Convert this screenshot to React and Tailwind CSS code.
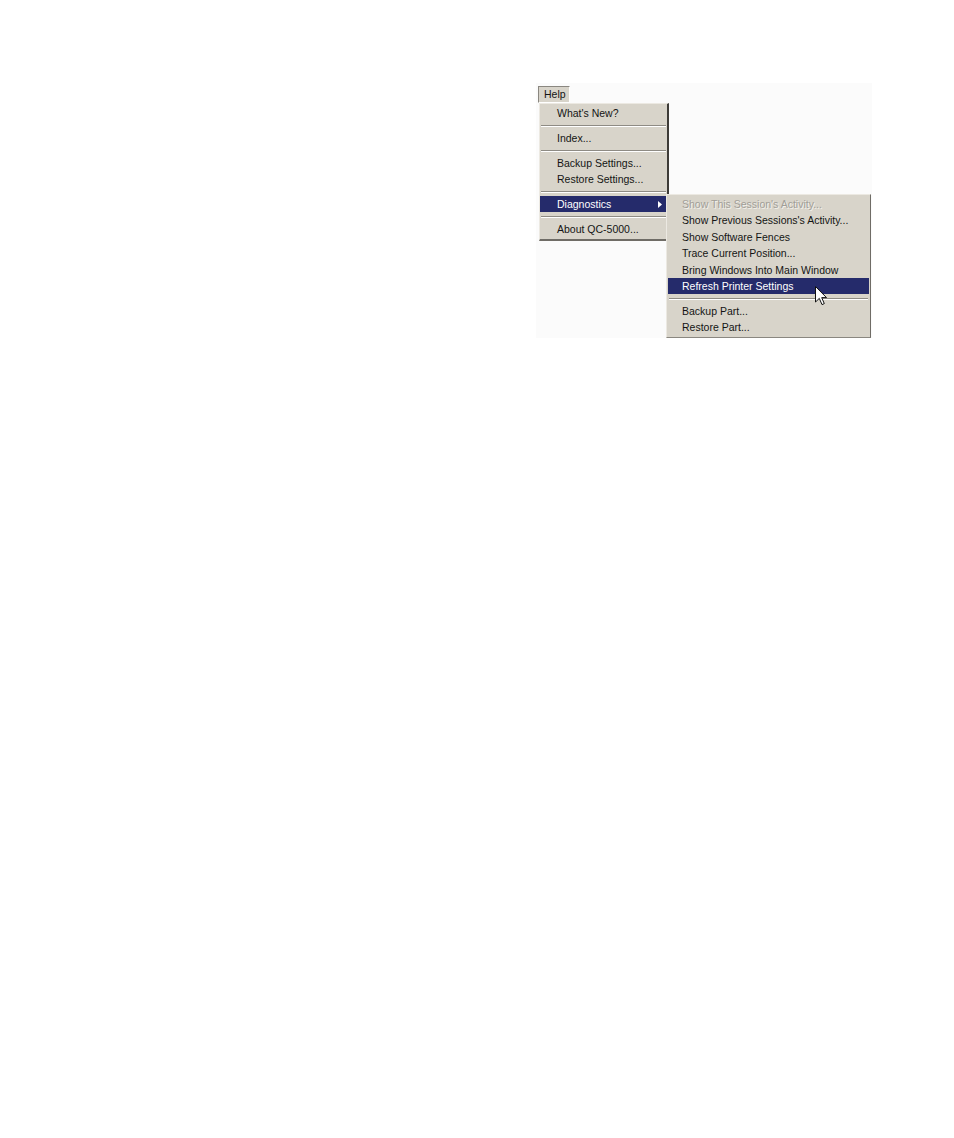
import React from 'react';

const mainItems = [
    { label: "What's New?" },
    { sep: true },
    { label: 'Index...' },
    { sep: true },
    { label: 'Backup Settings...' },
    { label: 'Restore Settings...' },
    { sep: true },
    { label: 'Diagnostics', active: true, sub: true },
    { sep: true },
    { label: 'About QC-5000...' },
];

const subItems = [
    { label: "Show This Session's Activity...", disabled: true },
    { label: "Show Previous Sessions's Activity..." },
    { label: 'Show Software Fences' },
    { label: 'Trace Current Position...' },
    { label: 'Bring Windows Into Main Window' },
    { label: 'Refresh Printer Settings', active: true },
    { sep: true },
    { label: 'Backup Part...' },
    { label: 'Restore Part...' },
];

const Separator = () => (
    <div className="h-[8.5px] flex flex-col justify-center px-[1px]">
        <div className="h-px bg-[#8e8b84]" />
        <div className="h-px bg-white" />
    </div>
);

const MenuRow = ({ item, padLeft }) => {
    if (item.sep) return <Separator />;
    return (
        <div
            className={`relative h-[16.4px] flex items-center ${padLeft} ${item.active ? 'bg-[#252b6b] text-white' : item.disabled ? 'text-[#a19e97]' : 'text-[#141414]'}`}
        >
            <span className={item.disabled ? '[text-shadow:1px_1px_0_#f3f1ec]' : ''}>{item.label}</span>
            {item.sub && (
                <svg className="absolute right-[5px] top-[4.5px]" width="4" height="7" viewBox="0 0 4 7">
                    <path d="M0 0 L4 3.5 L0 7 Z" fill="#ffffff" />
                </svg>
            )}
        </div>
    );
};

const Cursor = () => (
    <svg className="absolute left-[148px] top-[91px]" width="13" height="20" viewBox="0 0 13 20">
        <path d="M0.5 0.5 L0.5 16 L4.3 12.4 L7 18.6 L9.3 17.6 L6.7 11.6 L11.5 11.6 Z" fill="#ffffff" stroke="#111111" strokeWidth="1" strokeLinejoin="miter" />
    </svg>
);

const App = () => {
    return (
        <div className="w-[954px] h-[1138px] bg-white pt-[83px] pl-[536px]" style={{ fontFamily: '"Liberation Sans", Arial, sans-serif' }}>
            <div className="relative w-[336px] h-[255px] bg-[#fbfbfb] text-[10.5px] leading-none pt-[3px]">
                {/* menu bar button */}
                <div className="ml-[2px] w-[32px] h-[17px] border border-t-[#8a8780] border-l-[#8a8780] border-r-white border-b-white bg-[#d8d4ca] flex items-center pl-[5px] text-[#141414]">
                    Help
                </div>

                {/* main menu */}
                <div className="ml-[3px] w-[130px] bg-[#d8d4ca] border-t border-l border-t-[#ece9e2] border-l-[#ece9e2] border-r-2 border-b-2 border-r-[#3d3b37] border-b-[#6f6c66] pt-[1px] pb-[2px]">
                    {mainItems.map((item, i) => (
                        <MenuRow key={i} item={item} padLeft="pl-[17px]" />
                    ))}
                </div>

                {/* Diagnostics submenu */}
                <div className="absolute left-[130px] top-[111px] w-[205px] bg-[#d8d4ca] border-t border-l border-t-[#ece9e2] border-l-[#ece9e2] border-r border-b border-r-[#6f6c66] border-b-[#8a8780] pt-[1px] pb-[1px] px-[1px]">
                    {subItems.map((item, i) => (
                        <MenuRow key={i} item={item} padLeft="pl-[14px]" />
                    ))}
                    <Cursor />
                </div>
            </div>
        </div>
    );
};

export default App;
